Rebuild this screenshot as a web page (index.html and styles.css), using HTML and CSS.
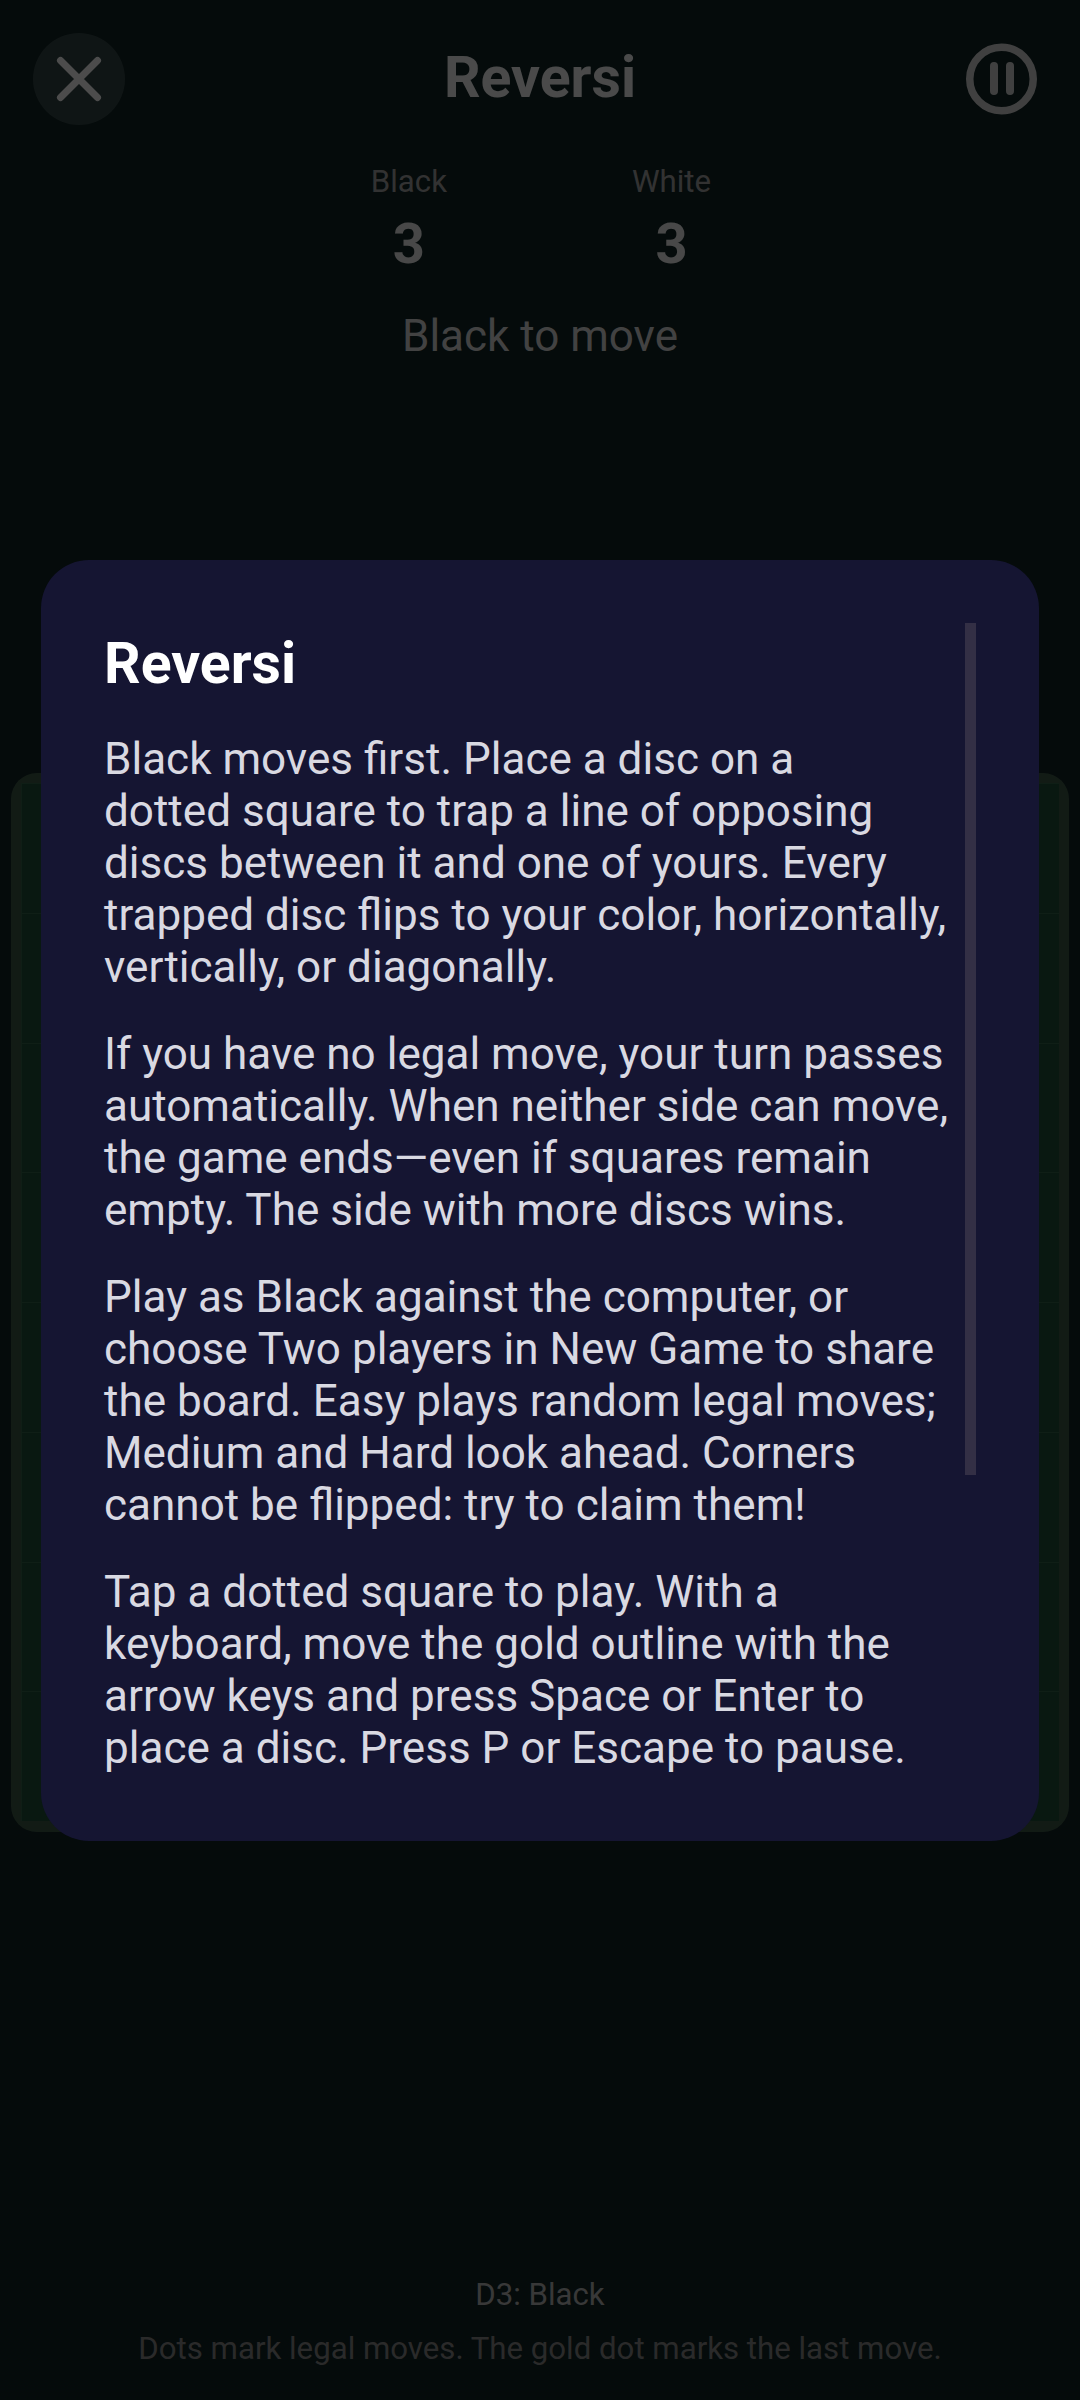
FILE: index.html
```html
<!DOCTYPE html>
<html lang="en">
<head>
<meta charset="utf-8">
<title>Reversi</title>
<link rel="stylesheet" href="styles.css">
</head>
<body>
<main class="game">
  <header class="topbar">
    <button class="close-btn" aria-label="Close">
      <svg class="close-icon" viewBox="0 0 48 48" aria-hidden="true"><path d="M5.500 5.500 42.500 42.500M42.500 5.500 5.500 42.500"/></svg>
    </button>
    <h1 class="game-title">Reversi</h1>
    <button class="pause-btn" aria-label="Pause">
      <svg class="pause-icon" viewBox="0 0 72 72" aria-hidden="true"><circle cx="36.500" cy="36" r="31.750"/><path d="M29 23V48M45 23V48"/></svg>
    </button>
  </header>
  <section class="scores">
    <div class="score"><span class="score-label">Black</span><span class="score-value">3</span></div>
    <div class="score"><span class="score-label">White</span><span class="score-value">3</span></div>
  </section>
  <p class="status">Black to move</p>
  <section class="board">
    <div class="cell"></div><div class="cell"></div><div class="cell"></div><div class="cell"></div><div class="cell"></div><div class="cell"></div><div class="cell"></div><div class="cell"></div>
    <div class="cell"></div><div class="cell"></div><div class="cell"></div><div class="cell"></div><div class="cell"></div><div class="cell"></div><div class="cell"></div><div class="cell"></div>
    <div class="cell"></div><div class="cell"></div><div class="cell"></div><div class="cell"></div><div class="cell"></div><div class="cell"></div><div class="cell"></div><div class="cell"></div>
    <div class="cell"></div><div class="cell"></div><div class="cell"></div><div class="cell"></div><div class="cell"></div><div class="cell"></div><div class="cell"></div><div class="cell"></div>
    <div class="cell"></div><div class="cell"></div><div class="cell"></div><div class="cell"></div><div class="cell"></div><div class="cell"></div><div class="cell"></div><div class="cell"></div>
    <div class="cell"></div><div class="cell"></div><div class="cell"></div><div class="cell"></div><div class="cell"></div><div class="cell"></div><div class="cell"></div><div class="cell"></div>
    <div class="cell"></div><div class="cell"></div><div class="cell"></div><div class="cell"></div><div class="cell"></div><div class="cell"></div><div class="cell"></div><div class="cell"></div>
    <div class="cell"></div><div class="cell"></div><div class="cell"></div><div class="cell"></div><div class="cell"></div><div class="cell"></div><div class="cell"></div><div class="cell"></div>
  </section>
  <footer class="footer">
    <p class="last-move">D3: Black</p>
    <p class="hint">Dots mark legal moves. The gold dot marks the last move.</p>
  </footer>
</main>
<div class="scrim"></div>
<section class="dialog" role="dialog" aria-label="Reversi">
  <span class="scrollbar"></span>
  <h2 class="dialog-title">Reversi</h2>
  <p class="dialog-text">Black moves first. Place a disc on a<br>dotted square to trap a line of opposing<br>discs between it and one of yours. Every<br>trapped disc flips to your color, horizontally,<br>vertically, or diagonally.</p>
  <p class="dialog-text">If you have no legal move, your turn passes automatically. When neither side can move, the game ends—even if squares remain empty. The side with more discs wins.</p>
  <p class="dialog-text">Play as Black against the computer, or choose Two players in New Game to share the board. Easy plays random legal moves; Medium and Hard look ahead. Corners cannot be flipped: try to claim them!</p>
  <p class="dialog-text">Tap a dotted square to play. With a keyboard, move the gold outline with the arrow keys and press Space or Enter to place a disc. Press P or Escape to pause.</p>
</section>
</body>
</html>
```
FILE: styles.css
```css
* { box-sizing: border-box; }
html, body { margin: 0; height: 2400px; overflow: hidden; }
body { background: #112525; font-family: Roboto, "Liberation Sans", sans-serif; color: #f8f8f8; position: relative; }
.game { display: flex; flex-direction: column; align-items: center; height: 2400px; }
.topbar { width: 100%; height: 158px; display: flex; align-items: center; justify-content: space-between; padding: 0 43px 0 33px; position: relative; }
button { border: 0; padding: 0; background: none; display: flex; align-items: center; justify-content: center; }
.close-btn { width: 92px; height: 92px; border-radius: 50%; background: #354848; }
.close-icon { width: 48px; height: 48px; }
.close-icon path { fill: none; stroke: #fff; stroke-width: 7; stroke-linecap: round; }
.game-title { position: absolute; left: 0; right: 0; margin: 0; text-align: center; font-size: 57.2px; font-weight: 700; line-height: 66px; top: 45px; }
.pause-btn { width: 72px; height: 72px; }
.pause-icon { width: 72px; height: 72px; }
.pause-icon circle, .pause-icon path { fill: none; stroke: #d8d8d8; }
.pause-icon circle { stroke-width: 7.500; }
.pause-icon path { stroke-width: 8; stroke-linecap: round; }
.scores { display: flex; justify-content: center; gap: 184px; margin-top: 6px; padding-left: 1px; }
.score { display: flex; flex-direction: column; align-items: center; min-width: 78px; }
.score-label { font-size: 31.2px; line-height: 36px; color: #a8a8a8; }
.score-value { font-size: 56px; line-height: 66px; font-weight: 700; margin-top: 11px; color: #f0f0f0; }
.status { margin: 33px 0 0; font-size: 44px; line-height: 52px; color: #dcdcdc; }
.board { width: 1058px; height: 1059px; position: absolute; left: 11px; top: 773px; padding: 10px 10px 11px; border-radius: 26px; background: #3f5c49; display: grid; grid-template-columns: repeat(8, 1fr); grid-template-rows: repeat(8, 1fr); }
.cell { background: #1f523a; border-top: 1px solid #32644c; border-left: 1px solid #32644c; }
.footer { margin-top: auto; padding-bottom: 32px; text-align: center; }
.last-move { margin: 0; font-size: 31.2px; line-height: 36px; color: #bcbcbc; }
.hint { margin: 17px 0 0; font-size: 31.2px; line-height: 38px; color: #8e8e8e; }
.scrim { position: absolute; inset: 0; background: rgba(0, 0, 0, .7); }
.dialog { position: absolute; left: 41px; top: 560px; width: 998px; height: 1281px; border-radius: 48px; background: #151532; padding: 63px 63px 0; overflow: hidden; color: #fff; }
.scrollbar { position: absolute; left: 924px; top: 63px; width: 11px; height: 852px; background: #332f45; }
.dialog-title { margin: 8px 0 36px; font-size: 57.2px; line-height: 66px; font-weight: 700; }
.dialog-text { margin: 0 0 35px; font-size: 44.05px; line-height: 52px; color: #d9d9e2; max-width: 860px; }
```
